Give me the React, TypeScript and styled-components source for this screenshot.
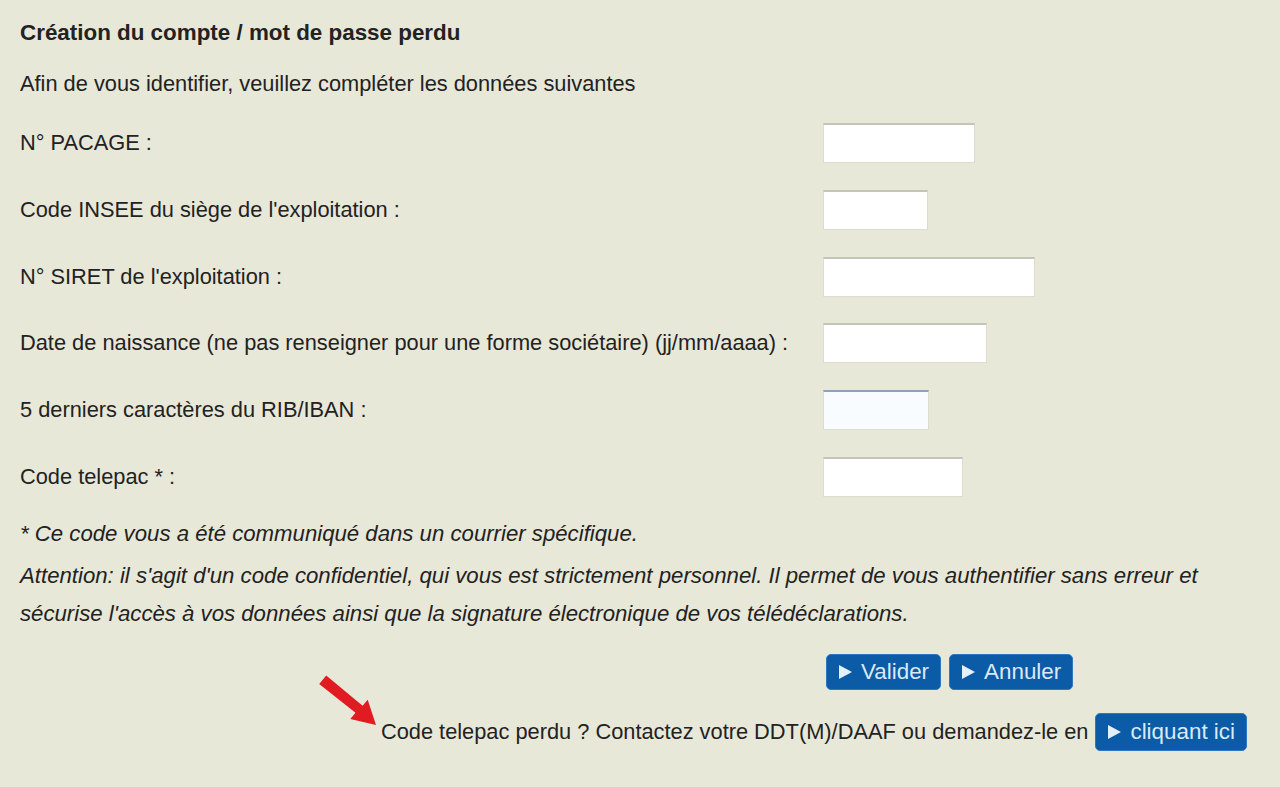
import * as React from 'react'
import styled, { createGlobalStyle } from 'styled-components'

const GlobalStyle = createGlobalStyle`
  html, body {
    margin: 0;
    padding: 0;
    background: #e8e8d9;
  }
  body {
    font-family: 'Liberation Sans', Arial, sans-serif;
    color: #222;
  }
`

const Page = styled.div`
  min-height: 787px;
  box-sizing: border-box;
  padding: 19px 20px 0 20px;
  font-size: 21.8px;
`

const Title = styled.h1`
  margin: 0;
  font-size: 22.4px;
  font-weight: bold;
  line-height: 28px;
`

const Intro = styled.p`
  margin: 23px 0 0 0;
  line-height: 28px;
`

const FieldGrid = styled.div`
  display: grid;
  grid-template-columns: 803px 1fr;
  grid-auto-rows: 40px;
  row-gap: 26.8px;
  margin-top: 25px;
`

const Label = styled.label`
  display: flex;
  align-items: center;
`

const Input = styled.input<{ $width: number; $active?: boolean }>`
  width: ${(p) => p.$width}px;
  height: 40px;
  box-sizing: border-box;
  border: 1px solid #dcdcd0;
  border-top: 2px solid ${(p) => (p.$active ? '#8aa4bb' : '#c4c4bb')};
  background: ${(p) => (p.$active ? '#f8fcff' : '#fff')};
  font-size: 18px;
  padding: 0 6px;
  outline: none;
`

const Notes = styled.div`
  margin-top: 17px;
  font-style: italic;
  font-size: 22.2px;
  line-height: 40px;
`

const NoteLine = styled.p<{ $top?: number }>`
  margin: 0;
  margin-top: ${(p) => p.$top ?? 0}px;
`

const ButtonRow = styled.div`
  display: flex;
  gap: 8px;
  margin: 20px 0 0 806px;
`

const Button = styled.button<{ $tall?: boolean }>`
  display: inline-flex;
  align-items: center;
  gap: 9px;
  height: ${(p) => (p.$tall ? 38 : 36)}px;
  padding: 0 11px 0 12px;
  border: 1px solid #2f78bf;
  border-radius: 5px;
  background: #0b5ba7;
  color: #dce9f6;
  font-family: 'Liberation Sans', Arial, sans-serif;
  font-size: 22.4px;
  cursor: pointer;
`

const Triangle = styled.span`
  width: 0;
  height: 0;
  border-top: 7px solid transparent;
  border-bottom: 7px solid transparent;
  border-left: 13px solid #e6f0fa;
`

const LostLine = styled.div`
  position: relative;
  display: flex;
  align-items: center;
  justify-content: flex-end;
  gap: 7px;
  margin: 23px 13px 0 0;
`

const Arrow = styled.svg`
  position: absolute;
  left: 298px;
  top: -38px;
  width: 58px;
  height: 50px;
`

const fields = [
  { label: 'N° PACAGE :', width: 152 },
  { label: "Code INSEE du siège de l'exploitation :", width: 105 },
  { label: "N° SIRET de l'exploitation :", width: 212 },
  {
    label:
      'Date de naissance (ne pas renseigner pour une forme sociétaire) (jj/mm/aaaa) :',
    width: 164,
  },
  { label: '5 derniers caractères du RIB/IBAN :', width: 106, active: true },
  { label: 'Code telepac * :', width: 140 },
]

const App: React.FunctionComponent = () => (
  <Page>
    <GlobalStyle />
    <Title>Création du compte / mot de passe perdu</Title>
    <Intro>Afin de vous identifier, veuillez compléter les données suivantes</Intro>
    <FieldGrid>
      {fields.map((field) => (
        <React.Fragment key={field.label}>
          <Label>{field.label}</Label>
          <div>
            <Input type="text" $width={field.width} $active={field.active} />
          </div>
        </React.Fragment>
      ))}
    </FieldGrid>
    <Notes>
      <NoteLine>* Ce code vous a été communiqué dans un courrier spécifique.</NoteLine>
      <NoteLine $top={2}>
        Attention: il s'agit d'un code confidentiel, qui vous est strictement personnel. Il
        permet de vous authentifier sans erreur et
      </NoteLine>
      <NoteLine $top={-2}>
        sécurise l'accès à vos données ainsi que la signature électronique de vos
        télédéclarations.
      </NoteLine>
    </Notes>
    <ButtonRow>
      <Button>
        <Triangle />
        Valider
      </Button>
      <Button>
        <Triangle />
        Annuler
      </Button>
    </ButtonRow>
    <LostLine>
      <Arrow viewBox="0 0 58 50">
        <polygon
          points="1.2,9 8.2,0.6 44.6,30.8 49.7,24.7 58,50 32.3,44 37.5,37.8"
          fill="#e01b22"
        />
      </Arrow>
      <span>Code telepac perdu ? Contactez votre DDT(M)/DAAF ou demandez-le en</span>
      <Button $tall>
        <Triangle />
        cliquant ici
      </Button>
    </LostLine>
  </Page>
)

export default App
